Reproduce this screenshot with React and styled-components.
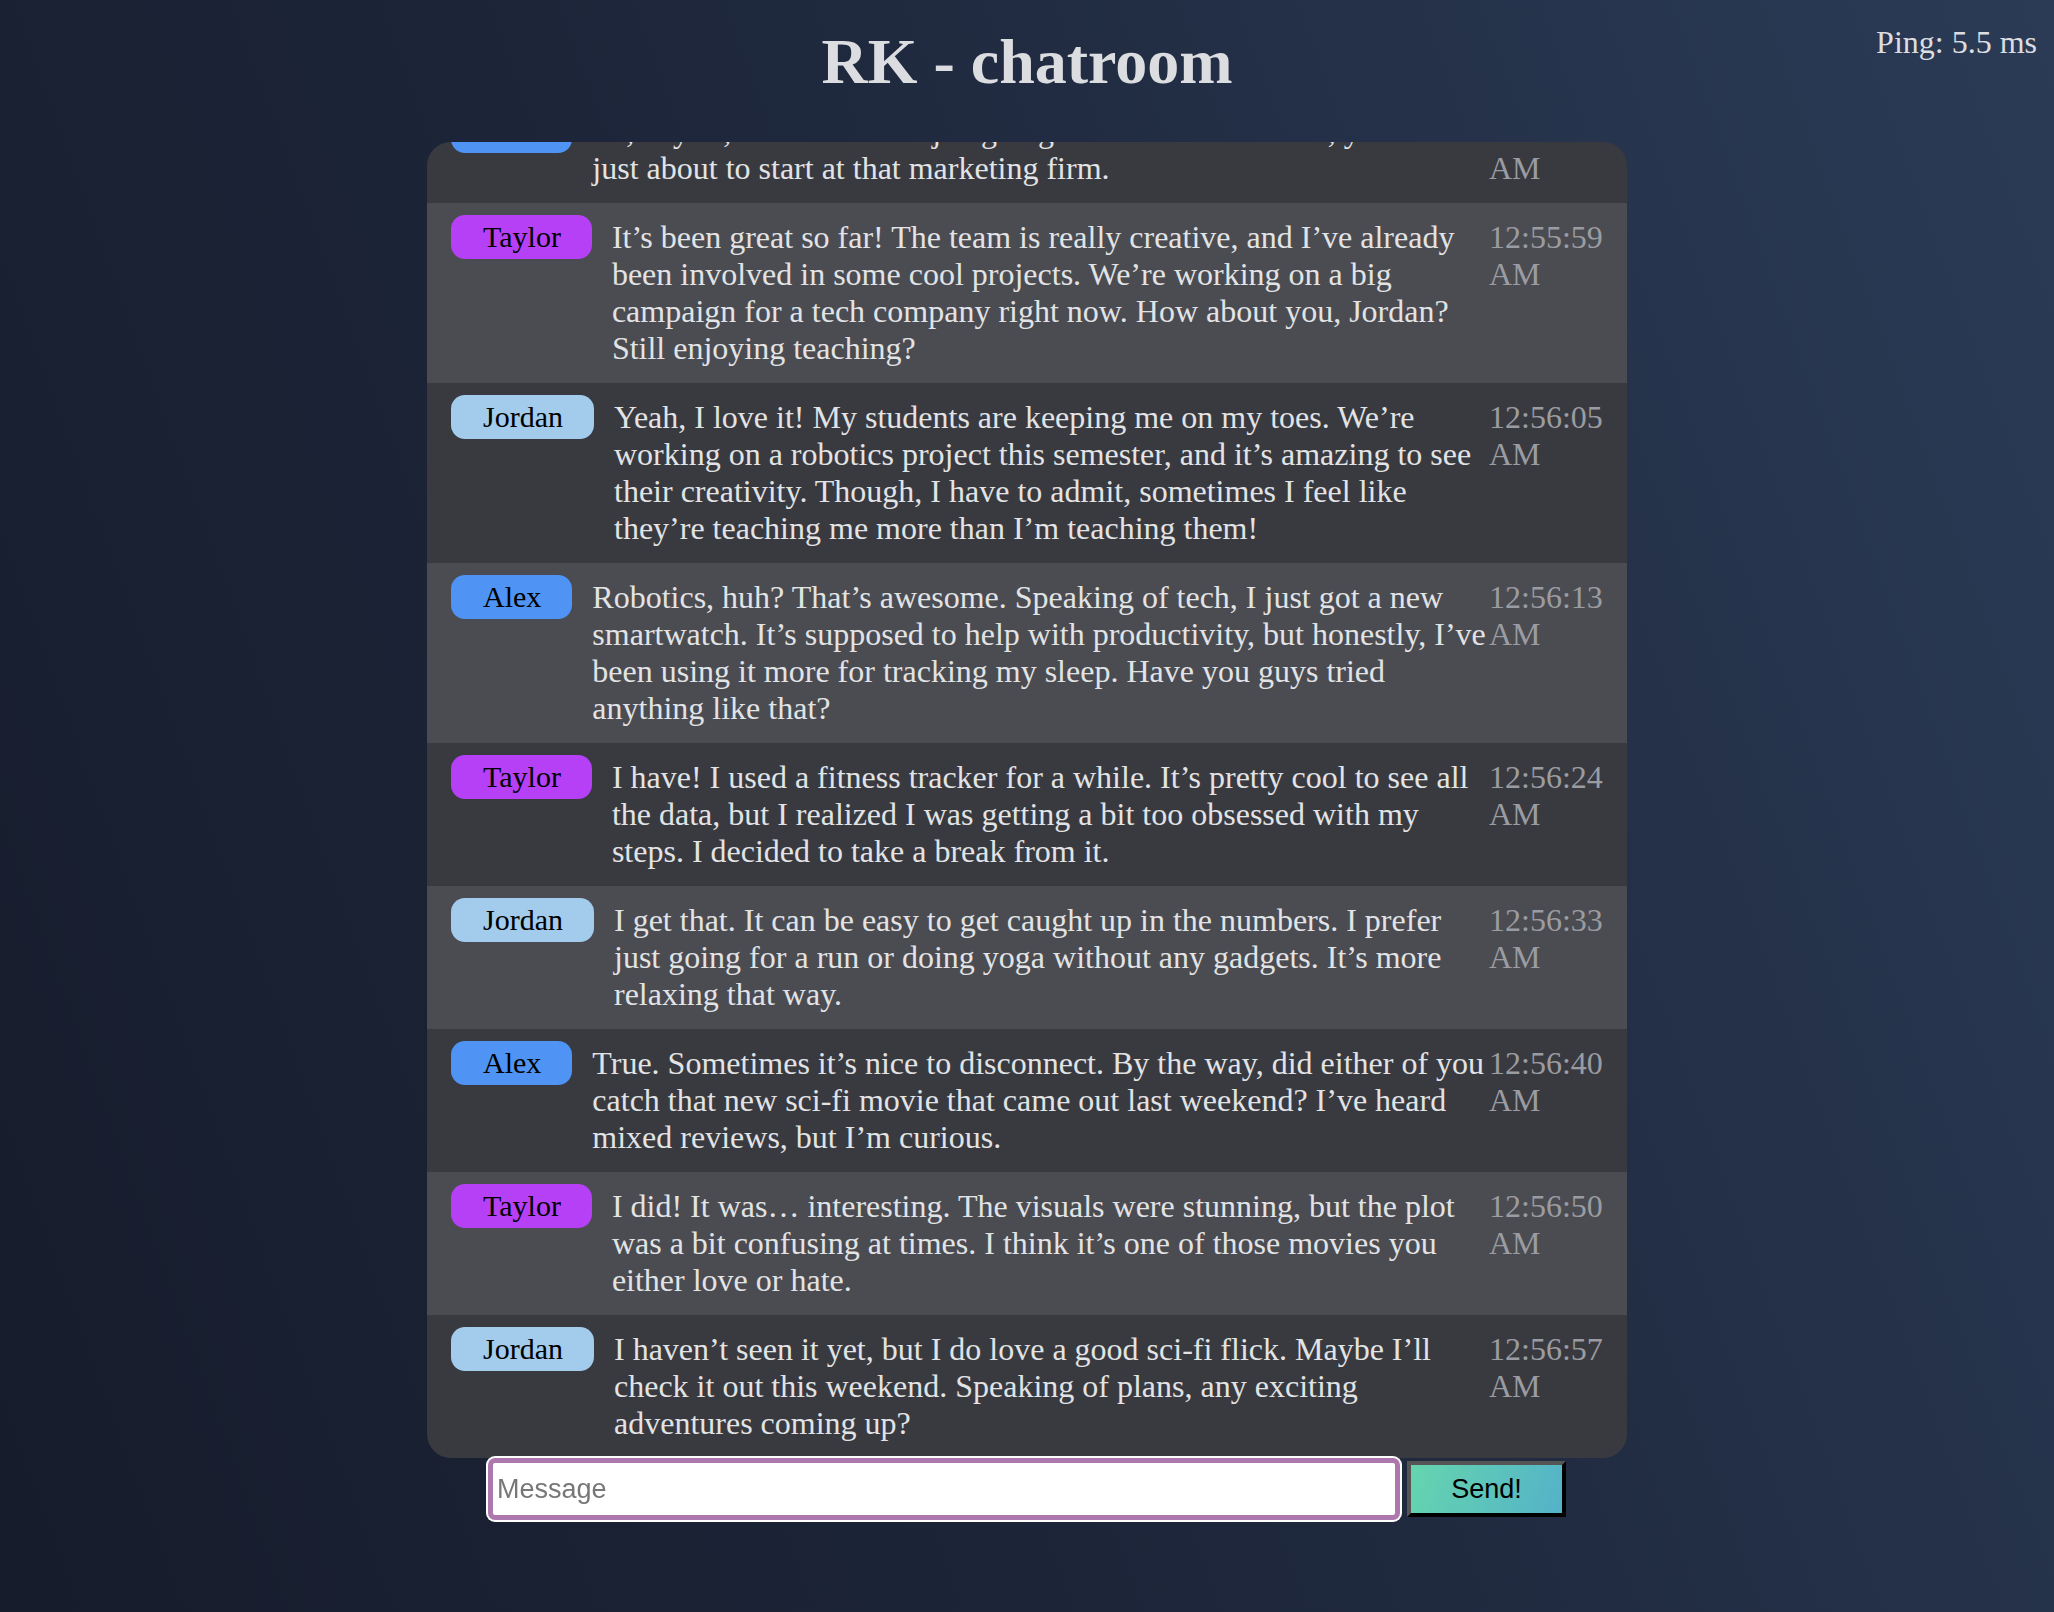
import React, { useLayoutEffect, useRef } from "react";
import styled, { createGlobalStyle } from "styled-components";

const GlobalStyle = createGlobalStyle`
  html, body {
    margin: 0;
    padding: 0;
    height: 100%;
  }
  body {
    background: linear-gradient(70deg, #161c2b 0%, #1d263a 45%, #2b3b56 100%);
    background-attachment: fixed;
    min-height: 1612px;
    font-family: "Liberation Serif", "Times New Roman", serif;
    color: #dcdde0;
  }
`;

const Page = styled.div`
  position: relative;
  display: flex;
  flex-direction: column;
  align-items: center;
  min-height: 1612px;
`;

const Title = styled.h1`
  margin: 25px 0 43px;
  font-size: 64px;
  font-weight: bold;
  color: #dcdde0;
  line-height: normal;
`;

const Ping = styled.div`
  position: absolute;
  top: 24px;
  right: 17px;
  font-size: 32px;
  color: #dcdde0;
`;

const ChatBox = styled.div`
  width: 1200px;
  height: 1316px;
  overflow-y: auto;
  border-radius: 24px;
  background: #393a40;
  scrollbar-width: none;
  &::-webkit-scrollbar {
    display: none;
  }
`;

const Row = styled.div`
  display: flex;
  align-items: flex-start;
  padding: 16px 24px;
  background: ${(p) => (p.$alt ? "#4b4c52" : "#393a40")};
  font-size: 32px;
  line-height: 37px;
`;

const Badge = styled.span`
  flex: none;
  margin-top: -4px;
  padding: 5px 31px 5px 32px;
  border-radius: 14px;
  background: ${(p) => p.$color};
  color: #000;
  font-size: 30px;
  line-height: 34px;
`;

const Text = styled.div`
  flex: 1;
  margin-left: 20px;
  color: #e2e3e5;
`;

const Time = styled.div`
  flex: none;
  width: 114px;
  color: #9b9ca1;
`;

const Form = styled.form`
  display: flex;
  align-items: center;
  gap: 7px;
  width: 1078px;
`;

const Input = styled.input`
  box-sizing: border-box;
  width: 912px;
  height: 62px;
  padding: 0 4px;
  border: 5px solid #ad78ad;
  border-radius: 7px;
  box-shadow: 0 0 0 2px #ffffff inset, 0 0 0 2px #ffffff;
  background: #fff;
  outline: none;
  font-family: "Liberation Sans", Arial, sans-serif;
  font-size: 27px;
  color: #000;
  &::placeholder {
    color: #777;
  }
`;

const SendButton = styled.button`
  box-sizing: border-box;
  width: 159px;
  height: 56px;
  border-style: solid;
  border-width: 4px;
  border-color: #555 #000 #000 #555;
  background: linear-gradient(110deg, #66d5ae 0%, #54b2c9 100%);
  font-family: "Liberation Sans", Arial, sans-serif;
  font-size: 27px;
  color: #000;
  cursor: pointer;
`;

const COLORS = {
  Alex: "#4f94f5",
  Taylor: "#b540f5",
  Jordan: "#a2cbec",
};

const MESSAGES = [
  ["Alex", "So, Taylor, how’s the new job going? Last time we talked, you were just about to start at that marketing firm.", "12:55:51 AM"],
  ["Taylor", "It’s been great so far! The team is really creative, and I’ve already been involved in some cool projects. We’re working on a big campaign for a tech company right now. How about you, Jordan? Still enjoying teaching?", "12:55:59 AM"],
  ["Jordan", "Yeah, I love it! My students are keeping me on my toes. We’re working on a robotics project this semester, and it’s amazing to see their creativity. Though, I have to admit, sometimes I feel like they’re teaching me more than I’m teaching them!", "12:56:05 AM"],
  ["Alex", "Robotics, huh? That’s awesome. Speaking of tech, I just got a new smartwatch. It’s supposed to help with productivity, but honestly, I’ve been using it more for tracking my sleep. Have you guys tried anything like that?", "12:56:13 AM"],
  ["Taylor", "I have! I used a fitness tracker for a while. It’s pretty cool to see all the data, but I realized I was getting a bit too obsessed with my steps. I decided to take a break from it.", "12:56:24 AM"],
  ["Jordan", "I get that. It can be easy to get caught up in the numbers. I prefer just going for a run or doing yoga without any gadgets. It’s more relaxing that way.", "12:56:33 AM"],
  ["Alex", "True. Sometimes it’s nice to disconnect. By the way, did either of you catch that new sci-fi movie that came out last weekend? I’ve heard mixed reviews, but I’m curious.", "12:56:40 AM"],
  ["Taylor", "I did! It was… interesting. The visuals were stunning, but the plot was a bit confusing at times. I think it’s one of those movies you either love or hate.", "12:56:50 AM"],
  ["Jordan", "I haven’t seen it yet, but I do love a good sci-fi flick. Maybe I’ll check it out this weekend. Speaking of plans, any exciting adventures coming up?", "12:56:57 AM"],
];

export default function App() {
  const boxRef = useRef(null);
  useLayoutEffect(() => {
    if (boxRef.current) boxRef.current.scrollTop = boxRef.current.scrollHeight;
  }, []);
  return (
    <>
      <GlobalStyle />
      <Page>
        <Ping>Ping: 5.5 ms</Ping>
        <Title>RK - chatroom</Title>
        <ChatBox ref={boxRef}>
          {MESSAGES.map(([name, text, time], i) => (
            <Row key={i} $alt={i % 2 === 1}>
              <Badge $color={COLORS[name]}>{name}</Badge>
              <Text>{text}</Text>
              <Time>{time}</Time>
            </Row>
          ))}
        </ChatBox>
        <Form onSubmit={(e) => e.preventDefault()}>
          <Input placeholder="Message" autoFocus />
          <SendButton type="submit">Send!</SendButton>
        </Form>
      </Page>
    </>
  );
}
